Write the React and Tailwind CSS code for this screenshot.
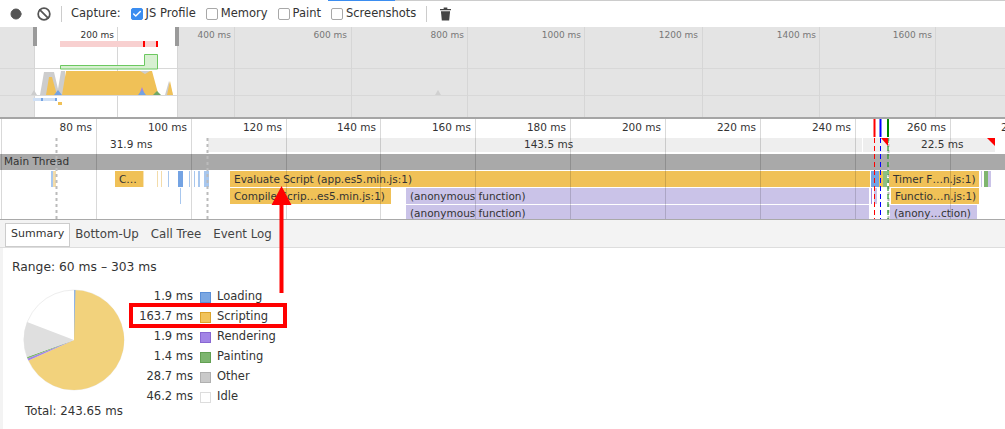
import { Circle, Ban, Check } from "lucide-react";

const font = { fontFamily: '"DejaVu Sans", sans-serif' };

const ticks = [1, 96, 191, 286, 380, 475, 570, 665, 760, 855, 950];
const rulerLabels = ["80 ms", "100 ms", "120 ms", "140 ms", "160 ms", "180 ms", "200 ms", "220 ms", "240 ms", "260 ms"];

const overviewLabels = [
  ["400 ms", 231],
  ["600 ms", 347],
  ["800 ms", 464],
  ["1000 ms", 581],
  ["1200 ms", 698],
  ["1400 ms", 816],
  ["1600 ms", 932],
];

// x, y, w, h, colour, label
const bars = [
  [51, 171, 2, 16, "#a8c7ee"],
  [53, 171, 3, 16, "#f3dcaa"],
  [115, 171, 28, 16, "#f0c157", "C…"],
  [143, 171, 1, 16, "#f8e3b4"],
  [157, 171, 1, 16, "#f3dcaa"],
  [161, 171, 1, 16, "#f3dcaa"],
  [168, 171, 1, 16, "#a8c7ee"],
  [178, 171, 5, 16, "#74a3e3"],
  [189, 171, 1, 16, "#a8c7ee"],
  [194, 171, 1, 16, "#a8c7ee"],
  [198, 171, 2, 16, "#a8c7ee"],
  [204, 171, 5, 16, "#a8c7ee"],
  [180, 188, 1, 16, "#a8c7ee"],
  [230, 171, 640, 16, "#f0c157", "Evaluate Script (app.es5.min.js:1)"],
  [230, 188, 161, 16, "#f0c157", "Compile Scrip…es5.min.js:1)"],
  [406, 188, 463, 16, "#cac3e8", "(anonymous function)"],
  [406, 205, 463, 14, "#cac3e8", "(anonymous function)"],
  [871, 171, 8, 16, "#74a3e3"],
  [879, 171, 4, 16, "#f0c157"],
  [871, 188, 1, 16, "#a28ee0"],
  [874, 188, 3, 16, "#cac3e8"],
  [883, 171, 4, 16, "#8fbf82"],
  [889, 171, 90, 16, "#f0c157", "Timer F…n.js:1)"],
  [891, 188, 88, 16, "#f0c157", "Functio…n.js:1)"],
  [890, 205, 87, 14, "#cac3e8", "(anony…ction)"],
  [981, 171, 1, 16, "#cac3e8"],
  [984, 171, 4, 16, "#7fb56f"],
  [988, 171, 3, 16, "#cac3e8"],
];

const legend = [
  ["1.9 ms", "Loading", "bg-[#7ba7e2] border-[#5b8fd8]"],
  ["163.7 ms", "Scripting", "bg-[#f1c35c] border-[#dca32c]"],
  ["1.9 ms", "Rendering", "bg-[#a284e6] border-[#8867d2]"],
  ["1.4 ms", "Painting", "bg-[#7db56f] border-[#62a052]"],
  ["28.7 ms", "Other", "bg-[#c9c9c9] border-[#b0b0b0]"],
  ["46.2 ms", "Idle", "bg-white border-[#dddddd]"],
];

function CheckOption({ label, checked }) {
  return (
    <label className="flex items-center gap-[3px] text-[11.5px] text-[#333]">
      <span className={`w-[12px] h-[12px] rounded-[2px] flex items-center justify-center border ${checked ? "bg-[#3b8df0] border-[#3b8df0]" : "bg-white border-[#a8a8a8]"}`}>
        {checked && <Check size={10} strokeWidth={3.5} color="white" />}
      </span>
      <span className="mt-[1px]">{label}</span>
    </label>
  );
}

function Toolbar() {
  return (
    <div className="h-[27px] flex items-center bg-white relative">
      <Circle size={12} className="ml-[10px] fill-[#555] text-[#555]" />
      <Ban size={14} strokeWidth={3} className="ml-[15px] text-[#555]" />
      <div className="w-px h-[16px] bg-[#ccc] ml-[10px]" />
      <span className="ml-[9px] mt-[1px] text-[11.5px] text-[#333]">Capture:</span>
      <div className="flex items-center gap-[10px] ml-[10px]">
        <CheckOption label="JS Profile" checked />
        <CheckOption label="Memory" />
        <CheckOption label="Paint" />
        <CheckOption label="Screenshots" />
      </div>
      <div className="w-px h-[16px] bg-[#ccc] ml-[10px]" />
      <TrashIcon />
      <div className="absolute top-0 left-[328px] w-[67px] h-px bg-[#3b8df0]" />
      <div className="absolute top-0 left-[395px] right-0 h-px bg-[#cccccc]" />
    </div>
  );
}

function TrashIcon() {
  return (
    <svg width="11" height="14" viewBox="0 0 12 14" className="ml-[13px]">
      <path d="M4 0h4v1.5h4V3H0V1.5h4z" fill="#444" />
      <path d="M1 4h10l-1 10H2z" fill="#444" />
    </svg>
  );
}

function Overview() {
  return (
    <div className="h-[92px] relative bg-[#e4e4e4] border-b-2 border-[#a5a5a5] overflow-hidden text-[9px] text-[#777]">
      {/* selected window */}
      <div className="absolute left-[35px] top-0 w-[142px] h-full bg-white" />
      <svg width="1005" height="90" className="absolute left-0 top-0">
        <line x1="0" x2="1005" y1="41.5" y2="41.5" stroke="#d8d8d8" />
        <line x1="0" x2="1005" y1="68.5" y2="68.5" stroke="#d8d8d8" />
        {[34.5, 117.5, 177.5, 234.5, 351.5, 467.5, 584.5, 702.5, 819.5, 935.5].map((x) => (
          <line key={x} x1={x} x2={x} y1="0" y2="90" stroke="#d6d6d6" />
        ))}
        <rect x="60" y="14" width="98" height="6" fill="#f8d0d0" />
        <rect x="143" y="14" width="2" height="6" fill="#f00" />
        <rect x="156" y="14" width="2" height="6" fill="#f00" />
        <path d="M60.5 42V38.5H144.5V27.5H157.5V42Z" fill="#d8f0d2" stroke="#6cc860" />
        <path d="M31 68L34 63L37 68Z M40 68L44 45L54 45L58 62L61 44L65 44V68Z M165 68L169 54L173 68Z" fill="#cdcdcd" />
        <path d="M46 68L49 50L52 50L57 68Z M62 68L66 44H152L158 66V68Z M167 68L170 54L173 68Z" fill="#f0c157" />
        <path d="M140 44H150L145 47Z" fill="#cdcdcd" />
        <path d="M139 68L142 60L145 68Z" fill="#a284e6" />
        <path d="M54 68L58 63L62 68Z M138 68L142 63L146 68Z" fill="#74a3e3" />
        <path d="M153 68L157 64L161 68Z" fill="#6fa866" />
        <rect x="33" y="71" width="24" height="3" fill="#cfe0f6" />
        <rect x="41" y="71" width="2" height="3" fill="#74a3e3" />
        <rect x="55" y="71" width="2" height="3" fill="#74a3e3" />
        <rect x="58" y="75" width="4" height="3" fill="#f0c157" />
        <path d="M435 68L438 63L441 68Z" fill="#d0d0d0" />
      </svg>
      <div className="absolute left-[33px] top-0 w-[4px] h-[19px] bg-[#9a9a9a]" />
      <div className="absolute left-[175px] top-0 w-[4px] h-[19px] bg-[#9a9a9a]" />
      <span className="absolute right-[891px] top-[2px] text-[#333]">200 ms</span>
      {overviewLabels.map(([t, r]) => (
        <span key={t} className="absolute top-[2px]" style={{ right: 1005 - r }}>{t}</span>
      ))}
    </div>
  );
}

function Flame() {
  return (
    <div className="h-[100px] relative bg-white overflow-hidden text-[10.5px] text-[#333]">
      {/* frames strip */}
      <div className="absolute left-[208px] top-[19px] w-[654px] h-[14px] bg-[#eeeeee]" />
      <div className="absolute left-[863px] top-[19px] w-[132px] h-[14px] bg-[#eeeeee]" />
      <span className="absolute left-[110px] top-[18px]">31.9 ms</span>
      <span className="absolute left-[524px] top-[18px]">143.5 ms</span>
      <span className="absolute left-[921px] top-[18px]">22.5 ms</span>
      <div className="absolute left-0 right-0 top-[35px] h-[16px] bg-[#a9a9a9] leading-[15px] pl-[4px]">Main Thread</div>
      {bars.map(([x, y, w, h, c, label], i) => (
        <div
          key={i}
          className="absolute overflow-hidden whitespace-nowrap leading-[16px]"
          style={{ left: x, top: y - 119, width: w, height: h, background: c }}
        >
          {label && <span className="ml-[4px]">{label}</span>}
        </div>
      ))}
      {rulerLabels.map((t, i) => (
        <span key={t} className="absolute top-[1px]" style={{ right: 1005 - ticks[i + 1] + 4 }}>{t}</span>
      ))}
      <span className="absolute left-[1001px] top-[1px]">2</span>
      <svg width="1005" height="100" className="absolute left-0 top-0 pointer-events-none">
        {ticks.map((x) => (
          <line key={x} x1={x + 0.5} x2={x + 0.5} y1="0" y2="100" stroke="#000" strokeOpacity="0.15" />
        ))}
        <line x1="56.5" x2="56.5" y1="19" y2="100" stroke="#bbb" strokeWidth="2" strokeDasharray="3 3" />
        <line x1="207.5" x2="207.5" y1="19" y2="100" stroke="#bbb" strokeWidth="2" strokeDasharray="3 3" />
        <line x1="888.5" x2="888.5" y1="19" y2="100" stroke="#bbb" strokeWidth="2" strokeDasharray="3 3" />
        <path d="M874.5 0V18" stroke="#f00" strokeWidth="2" />
        <path d="M880.5 0V18" stroke="#00f" strokeWidth="2" />
        <path d="M888 0V18" stroke="#080" strokeWidth="2" />
        <line x1="874.5" x2="874.5" y1="19" y2="100" stroke="#f00" strokeDasharray="5 3" />
        <line x1="880.5" x2="880.5" y1="19" y2="100" stroke="#00f" strokeDasharray="5 3" />
        <line x1="888" x2="888" y1="19" y2="100" stroke="#080" strokeDasharray="5 3" />
        <path d="M881 19H888V27Z" fill="#f00" />
        <path d="M987 19H995V27Z" fill="#f00" />
      </svg>
    </div>
  );
}

function Tabs() {
  return (
    <div className="h-[29px] flex items-center bg-[#f3f3f3] border-y border-t-[#a9a9a9] border-b-[#dddddd] pl-[5px] pt-[2px] text-[11.8px] text-[#444] gap-[12px]">
      <span className="h-[24px] flex items-center px-[5px] bg-white border border-[#ccc] text-[11px] text-[#333] -mr-[7px]">Summary</span>
      <span>Bottom-Up</span>
      <span>Call Tree</span>
      <span>Event Log</span>
    </div>
  );
}

function Summary() {
  return (
    <div className="flex-1 pl-[9px] pt-[10px] text-[#333] border-l-[3px] border-[#f3f3f3]">
      <div className="text-[12.3px] leading-[18px]">Range: 60 ms – 303 ms</div>
      <div className="flex mt-[12px] text-[11.5px]">
        <div className="flex flex-col items-center w-[124px]">
          <svg width="102" height="102" viewBox="-51 -51 102 102" className="mt-[1px]">
            <circle r="50" fill="#fff" stroke="#eee" />
            <path d="M0 0L0 -50A50 50 0 1 1 -45.5 20.5Z" fill="#f2d27c" />
            <path d="M0 0L-45.5 20.5L-46.5 18.5Z" fill="#a284e6" />
            <path d="M0 0L-46.5 18.5L-47 17Z" fill="#7db56f" />
            <path d="M0 0L-47 17A50 50 0 0 1 -47 -18Z" fill="#dfdfdf" />
            <path d="M0 0L0 -50L1.5 -50Z" fill="#8fb4e8" />
          </svg>
          <div className="mt-[12px] text-[11.8px]">Total: 243.65 ms</div>
        </div>
        <div className="flex flex-col mt-[-1px]">
          {legend.map(([time, name, swatch]) => (
            <div key={name} className="h-[20px] flex items-center">
              <span className="w-[57px] text-right whitespace-nowrap">{time}</span>
              <span className={`w-[11px] h-[11px] border ml-[7px] ${swatch}`} />
              <span className="ml-[6px]">{name}</span>
            </div>
          ))}
        </div>
      </div>
    </div>
  );
}

export default function App() {
  return (
    <div className="w-[1005px] h-[429px] bg-white flex flex-col relative overflow-hidden" style={font}>
      <Toolbar />
      <Overview />
      <Flame />
      <Tabs />
      <Summary />
      {/* annotation */}
      <div className="absolute left-[129px] top-[303px] w-[158px] h-[25px] border-[4px] border-[#f00]" />
      <svg width="30" height="110" className="absolute left-[267px] top-[185px]">
        <path d="M14.5 1L24.5 20H16.5V108H12.5V20H4.5Z" fill="#f00" />
      </svg>
    </div>
  );
}
